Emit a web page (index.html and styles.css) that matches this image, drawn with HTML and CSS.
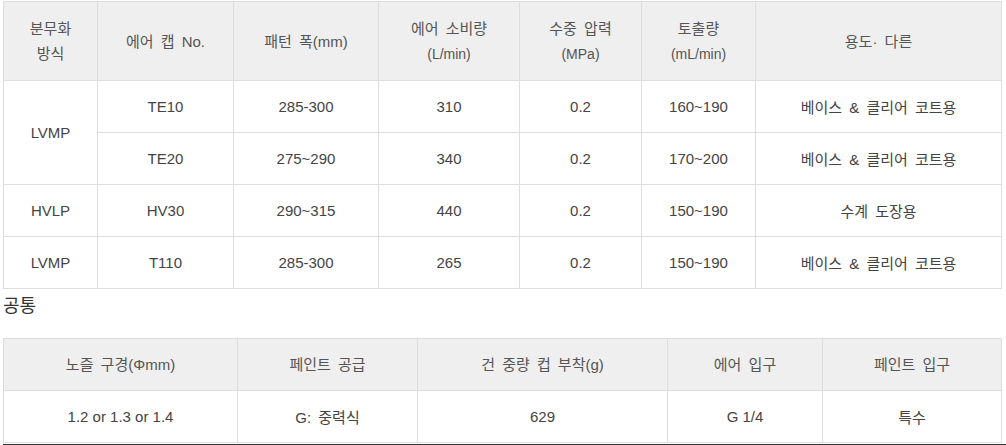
FILE: index.html
```html
<!DOCTYPE html>
<html lang="ko">
<head>
<meta charset="utf-8">
<link rel="stylesheet" href="styles.css">
</head>
<body>
<div class="page">
  <table class="spec spec-main">
    <colgroup>
      <col style="width:94px"><col style="width:136px"><col style="width:145px"><col style="width:141px"><col style="width:122px"><col style="width:114px"><col style="width:246px">
    </colgroup>
    <thead>
      <tr>
        <th>분무화<br>방식</th>
        <th>에어 캡 No.</th>
        <th>패턴 폭(mm)</th>
        <th>에어 소비량<br><span class="unit">(L/min)</span></th>
        <th>수중 압력<br><span class="unit">(MPa)</span></th>
        <th>토출량<br><span class="unit">(mL/min)</span></th>
        <th>용도· 다른</th>
      </tr>
    </thead>
    <tbody>
      <tr>
        <td rowspan="2">LVMP</td>
        <td>TE10</td><td>285-300</td><td>310</td><td>0.2</td><td>160~190</td><td class="ko">베이스 &amp; 클리어 코트용</td>
      </tr>
      <tr>
        <td>TE20</td><td>275~290</td><td>340</td><td>0.2</td><td>170~200</td><td class="ko">베이스 &amp; 클리어 코트용</td>
      </tr>
      <tr>
        <td>HVLP</td><td>HV30</td><td>290~315</td><td>440</td><td>0.2</td><td>150~190</td><td class="ko">수계 도장용</td>
      </tr>
      <tr>
        <td>LVMP</td><td>T110</td><td>285-300</td><td>265</td><td>0.2</td><td>150~190</td><td class="ko">베이스 &amp; 클리어 코트용</td>
      </tr>
    </tbody>
  </table>
  <p class="caption">공통</p>
  <table class="spec spec-common">
    <colgroup>
      <col style="width:234px"><col style="width:180px"><col style="width:250px"><col style="width:155px"><col style="width:179px">
    </colgroup>
    <thead>
      <tr>
        <th>노즐 구경(Φmm)</th>
        <th>페인트 공급</th>
        <th>건 중량 컵 부착(g)</th>
        <th>에어 입구</th>
        <th>페인트 입구</th>
      </tr>
    </thead>
    <tbody>
      <tr>
        <td>1.2 or 1.3 or 1.4</td>
        <td class="ko">G: 중력식</td>
        <td>629</td>
        <td>G 1/4</td>
        <td>특수</td>
      </tr>
    </tbody>
  </table>
  <div class="rule"></div>
</div>
</body>
</html>
```

FILE: styles.css
```css
html, body {
  margin: 0;
  padding: 0;
  background: #fff;
}
body {
  font-family: "Liberation Sans", "Noto Sans CJK KR", sans-serif;
  font-size: 15px;
  color: #444;
}
.page {
  padding: 1px 0 0 3px;
}
.spec {
  border-collapse: collapse;
  table-layout: fixed;
  width: 998px;
}
.spec th,
.spec td {
  border: 1px solid #ddd;
  text-align: center;
  vertical-align: middle;
  padding: 0;
  font-weight: normal;
}
.spec th {
  background: #efefef;
  color: #555;
  line-height: 25px;
  word-spacing: 3px;
}
.spec td {
  color: #444;
  height: 51px;
}
.spec td.ko {
  word-spacing: 3px;
}
.spec-main thead th {
  height: 78px;
}
.spec-common thead th {
  height: 51px;
}
.unit {
  font-size: 14px;
}
.caption {
  margin: 0;
  height: 49px;
  padding-top: 5px;
  box-sizing: border-box;
  font-size: 18px;
  color: #333;
  line-height: 24px;
}
.rule {
  height: 3px;
  background: #333;
  margin-top: 1px;
}
```
